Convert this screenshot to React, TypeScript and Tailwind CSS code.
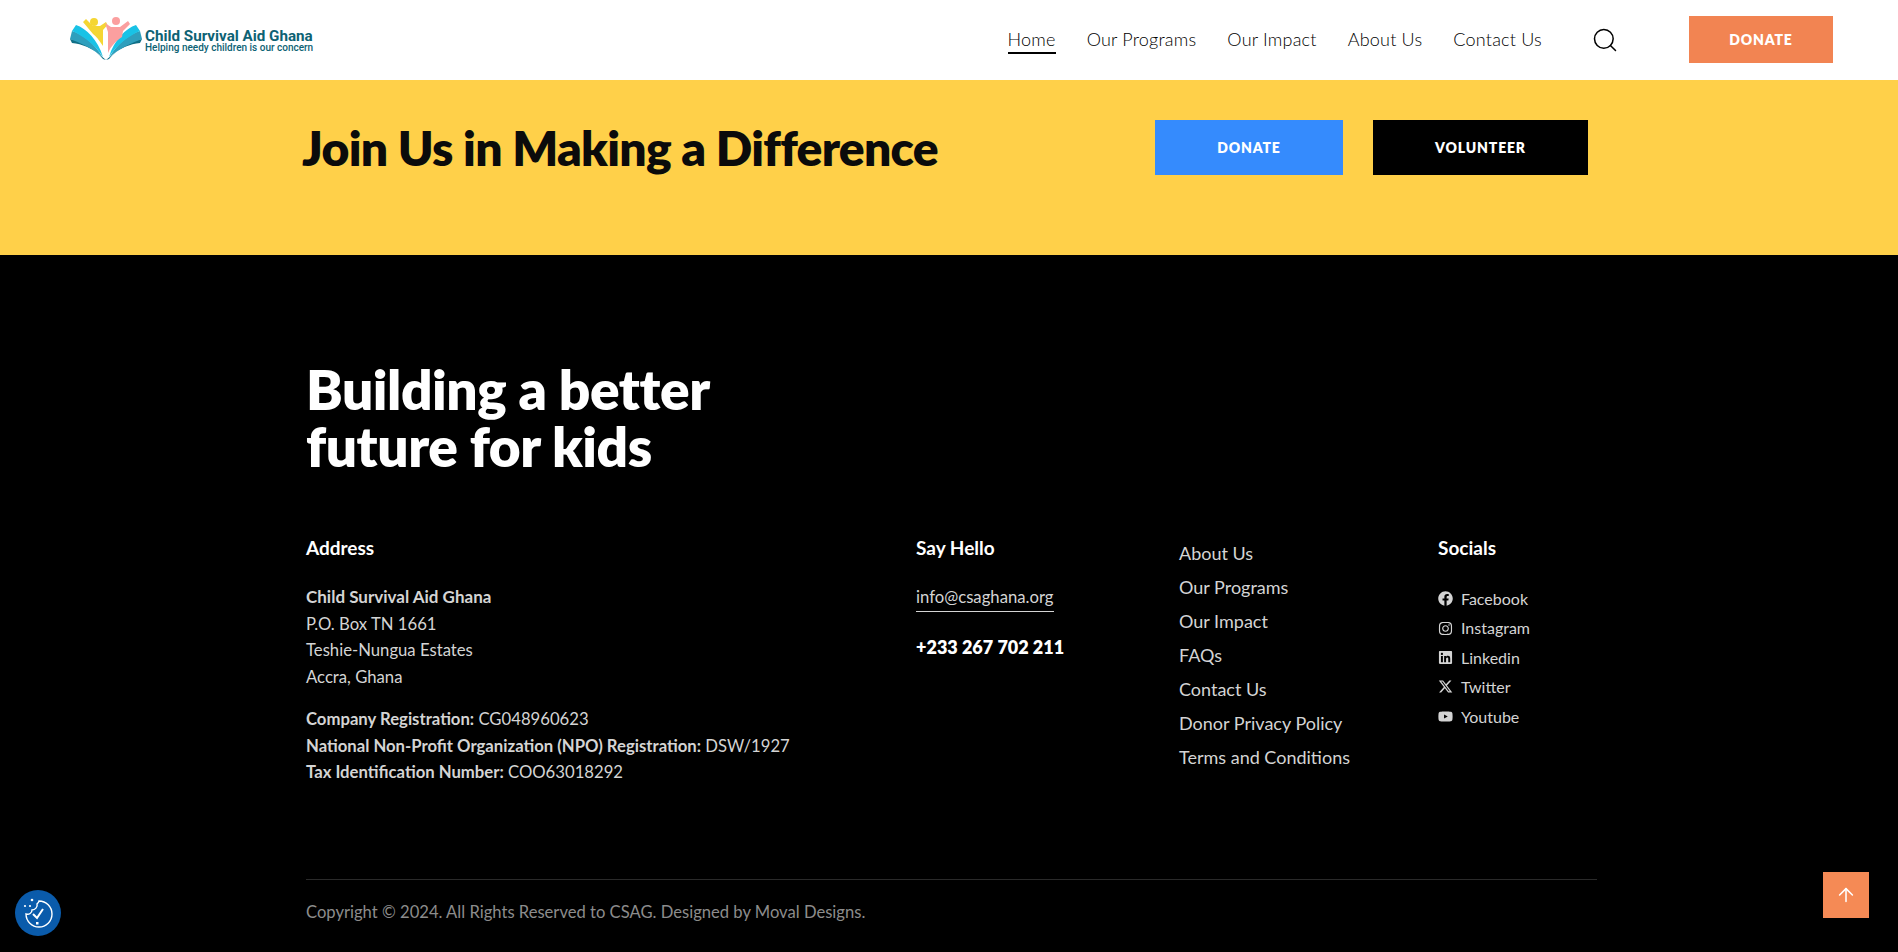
import { Search, ArrowUp } from "lucide-react";
import { FaFacebook, FaInstagram, FaLinkedin, FaYoutube } from "react-icons/fa";
import { FaXTwitter } from "react-icons/fa6";

const navLinks = ["Home", "Our Programs", "Our Impact", "About Us", "Contact Us"];
const footerLinks = ["About Us", "Our Programs", "Our Impact", "FAQs", "Contact Us", "Donor Privacy Policy", "Terms and Conditions"];
const socials = [
  { label: "Facebook", icon: <FaFacebook className="h-[15px] w-[15px]" /> },
  { label: "Instagram", icon: <FaInstagram className="h-[15px] w-[15px]" /> },
  { label: "Linkedin", icon: <FaLinkedin className="h-[15px] w-[15px]" /> },
  { label: "Twitter", icon: <FaXTwitter className="h-[15px] w-[15px]" /> },
  { label: "Youtube", icon: <FaYoutube className="h-[15px] w-[15px]" /> },
];

function LogoMark() {
  return (
    <svg viewBox="0 0 72 44" className="h-[44px] w-[72px]">
      {/* book pages, left then right */}
      <path d="M0 23 C10 24 24 32 33 43 L36 44 L30 39 C22 32 12 28 2 27 Z" fill="#0f6f86" />
      <path d="M2 15 C12 18 24 26 33 42 L30 39 C20 31 10 27 0 23 Z" fill="#2f9fbd" />
      <path d="M6 9 C16 12 28 24 33 41 C26 30 14 20 2 15 Z" fill="#19c2e6" />
      <path d="M72 23 C62 24 48 32 39 43 L36 44 L42 39 C50 32 60 28 70 27 Z" fill="#0f6f86" />
      <path d="M70 15 C60 18 48 26 39 42 L42 39 C52 31 62 27 72 23 Z" fill="#2f9fbd" />
      <path d="M66 9 C56 12 44 24 39 41 C46 30 58 20 70 15 Z" fill="#19c2e6" />
      {/* two children */}
      <path d="M13 6 L16 3 L23 10 L30 10 L36 6 L37.5 9 L33 14 L33 30 C29 24 26 20 23 18 Z" fill="#f5d633" />
      <circle cx="24" cy="6" r="4" fill="#f5d633" />
      <path d="M35 7 L41 11 L50 11 L58 5 L60 8 L53 15 L52 21 C46 25 41 30 38 37 L38 16 Z" fill="#fb9f9f" />
      <circle cx="46" cy="5" r="4" fill="#fb9f9f" />
    </svg>
  );
}

function CookieIcon() {
  return (
    <svg viewBox="0 0 32 32" fill="none" stroke="white" strokeWidth="1.4" className="h-[32px] w-[32px]">
      <path d="M17 4 A13 13 0 1 1 4 17 C7 18 10 16 10 13 C13 13 16 10 15 7 C16 6 17 5 17 4 Z" />
      <path d="M11 17 L15 21 L21 12" strokeWidth="2" />
      <rect x="14" y="25" width="2.5" height="2.5" fill="white" stroke="none" />
      <circle cx="10" cy="3" r="1.3" fill="white" stroke="none" />
      <circle cx="3" cy="9" r="1.1" fill="white" stroke="none" />
      <circle cx="8" cy="9" r="1.1" fill="white" stroke="none" />
    </svg>
  );
}

export default function App() {
  return (
    <div className="relative h-[952px] overflow-hidden bg-black font-['Lato',sans-serif]">
      <header className="flex h-[80px] items-center bg-white pl-[70px] pr-[65px]">
        <div className="flex items-center gap-[3px] pb-[5px]">
          <LogoMark />
          <div className="pt-[6px] font-['Roboto',sans-serif] text-[#0d6274]">
            <div className="text-[15.2px] leading-[14px] font-bold">Child Survival Aid Ghana</div>
            <div className="text-[10px] leading-[10px] font-medium">Helping needy children is our concern</div>
          </div>
        </div>
        <nav className="mb-[2px] ml-auto flex items-center gap-[31px] text-[18px] font-light tracking-[0.012em] text-black">
          {navLinks.map((link) => (
            <a key={link} className={link === "Home" ? "border-b-2 border-black pt-[2px] leading-[26px]" : "border-b-2 border-transparent pt-[2px] leading-[26px]"}>
              {link}
            </a>
          ))}
        </nav>
        <Search className="ml-[49px] h-[28px] w-[28px] text-black" strokeWidth={1.3} />
        <button className="mb-[1px] ml-[70px] h-[47px] w-[144px] bg-[#f28452] text-[14px] font-extrabold tracking-[0.06em] text-white">DONATE</button>
      </header>

      <section className="flex h-[175px] items-start bg-[#ffd049] pl-[302px] pt-[40px]">
        <h2 className="w-[853px] text-[48px] leading-[56px] font-extrabold tracking-[-0.015em] text-[#0b0b0b]">Join Us in Making a Difference</h2>
        <div className="flex gap-[30px]">
          <button className="h-[55px] w-[188px] bg-[#358bfd] text-[14px] font-extrabold tracking-[0.06em] text-white">DONATE</button>
          <button className="h-[55px] w-[215px] bg-black text-[14px] font-extrabold tracking-[0.06em] text-white">VOLUNTEER</button>
        </div>
      </section>

      <footer className="pl-[306px] pr-[301px] pt-[106px] text-[#d4d4d4]">
        <h2 className="text-[55px] leading-[57px] font-extrabold tracking-[-0.008em] text-white">
          Building a better
          <br />
          future for kids
        </h2>

        <div className="mt-[60px] grid grid-cols-[610px_263px_259px_1fr] text-[16.7px]">
          <div>
            <h3 className="text-[19px] leading-[26px] font-bold text-white">Address</h3>
            <div className="mt-[23px] leading-[26.5px]">
              <p className="text-[17px] font-bold">Child Survival Aid Ghana</p>
              <p>P.O. Box TN 1661</p>
              <p>Teshie-Nungua Estates</p>
              <p>Accra, Ghana</p>
            </div>
            <div className="mt-[16px] leading-[26.5px]">
              <p><b>Company Registration:</b> CG048960623</p>
              <p><b>National Non-Profit Organization (NPO) Registration:</b> DSW/1927</p>
              <p><b>Tax Identification Number:</b> COO63018292</p>
            </div>
          </div>

          <div>
            <h3 className="text-[19px] leading-[26px] font-bold text-white">Say Hello</h3>
            <a className="mt-[23px] block w-fit border-b border-[#d4d4d4] pb-[1px] leading-[26px]">info@csaghana.org</a>
            <p className="mt-[22px] text-[18px] leading-[26px] font-extrabold text-white">+233 267 702 211</p>
          </div>

          <ul className="pt-[1px] text-[18px] leading-[34px]">
            {footerLinks.map((link) => (
              <li key={link}>{link}</li>
            ))}
          </ul>

          <div>
            <h3 className="text-[19px] leading-[26px] font-bold text-white">Socials</h3>
            <ul className="mt-[23px] text-[16px] leading-[29.4px]">
              {socials.map((s) => (
                <li key={s.label} className="flex items-center gap-[8px]">
                  {s.icon}
                  <span>{s.label}</span>
                </li>
              ))}
            </ul>
          </div>
        </div>

        <div className="mt-[93px] border-t border-[#2a2a2a] pt-[19px] text-[16.6px] leading-[26px] text-[#8c8c8c]">
          Copyright © 2024. All Rights Reserved to CSAG. Designed by Moval Designs.
        </div>
      </footer>

      <button className="absolute bottom-[16px] left-[15px] flex h-[46px] w-[46px] items-center justify-center rounded-full bg-[#0a5bab]">
        <CookieIcon />
      </button>
      <button className="absolute bottom-[34px] right-[29px] flex h-[46px] w-[46px] items-center justify-center bg-[#f58a55]">
        <ArrowUp className="h-[22px] w-[22px] text-white" strokeWidth={1.7} />
      </button>
    </div>
  );
}
